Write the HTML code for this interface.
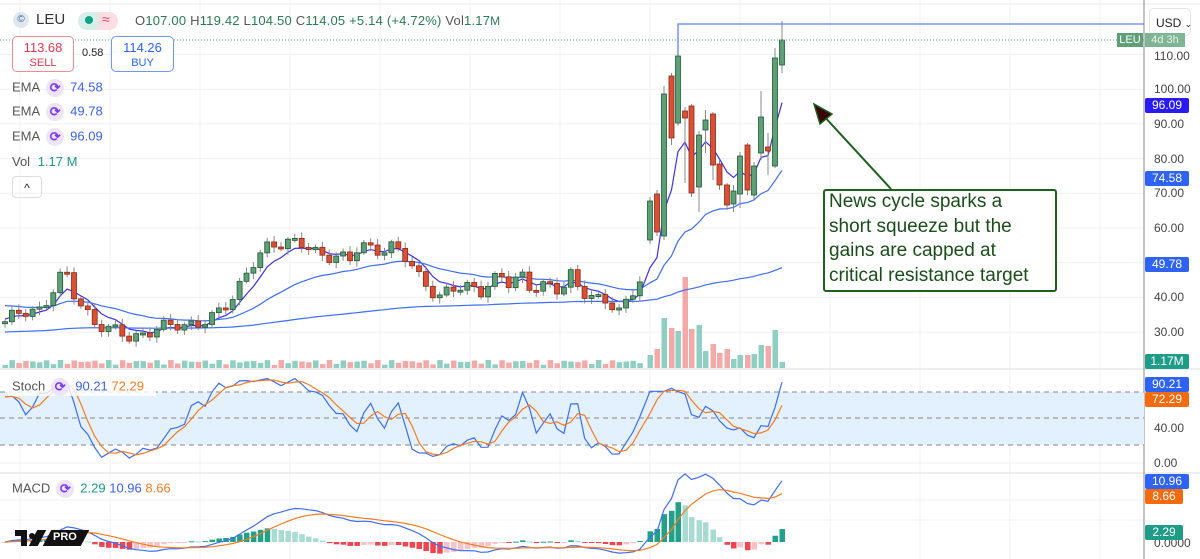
<!DOCTYPE html>
<html><head><meta charset="utf-8"><style>
body{margin:0;width:1200px;height:559px;overflow:hidden;background:#fff;font-family:"Liberation Sans",sans-serif;position:relative}
.t{position:absolute;white-space:nowrap}
.lbl{position:absolute;left:1145px;width:44px;height:15px;color:#fff;font-size:12px;line-height:15px;text-align:center;border-radius:2px}
.ax{position:absolute;left:1154px;font-size:12px;color:#444}
.ic{display:inline-block;width:18px;height:18px;border-radius:50%;background:#ece4fb;color:#7b3bf0;text-align:center;line-height:18px;font-size:13px;font-weight:bold;vertical-align:middle;margin:0 6px}
</style></head><body>
<svg id="s" width="1200" height="559" style="position:absolute;left:0;top:0"></svg>

<div class="t" style="left:13px;top:12px;width:16px;height:16px;border-radius:50%;background:#dfe6ee;color:#3a6a9a;font-size:10px;text-align:center;line-height:16px">©</div>
<div class="t" style="left:36px;top:11px;font-size:15px;color:#333">LEU</div>
<div class="t" style="left:78px;top:12px;width:40px;height:18px;border-radius:9px;background:linear-gradient(90deg,#d7efe9 50%,#fbdde3 50%)"></div>
<div class="t" style="left:85px;top:16px;width:8px;height:8px;border-radius:50%;background:#13a085"></div>
<div class="t" style="left:102px;top:11px;color:#e0426a;font-size:14px">≈</div>
<div class="t" style="left:135px;top:13px;font-size:13px;color:#2a7a55;letter-spacing:0.2px"><span style="color:#555">O</span>107.00 <span style="color:#555">H</span>119.42 <span style="color:#555">L</span>104.50 <span style="color:#555">C</span>114.05 +5.14 (+4.72%) <span style="color:#555">Vol</span>1.17<span style="font-size:12px">M</span></div>

<div class="t" style="left:12px;top:36px;width:60px;height:34px;border:1px solid #f08a96;border-radius:5px;text-align:center;background:#fff">
<div style="color:#e8384f;font-size:13px;margin-top:3px">113.68</div><div style="color:#e8384f;font-size:11px;margin-top:2px">SELL</div></div>
<div class="t" style="left:82px;top:47px;font-size:11px;color:#222">0.58</div>
<div class="t" style="left:111px;top:36px;width:61px;height:34px;border:1px solid #6f98f5;border-radius:5px;text-align:center;background:#fff">
<div style="color:#2962ff;font-size:13px;margin-top:3px">114.26</div><div style="color:#2962ff;font-size:11px;margin-top:2px">BUY</div></div>

<div class="t" style="left:12px;top:79px;font-size:13px;color:#555">EMA<span class="ic">⟳</span><span style="color:#3b62f0">74.58</span></div>
<div class="t" style="left:12px;top:103px;font-size:13px;color:#555">EMA<span class="ic">⟳</span><span style="color:#3b62f0">49.78</span></div>
<div class="t" style="left:12px;top:128px;font-size:13px;color:#555">EMA<span class="ic">⟳</span><span style="color:#3b62f0">96.09</span></div>
<div class="t" style="left:12px;top:154px;font-size:13px;color:#555">Vol <span style="color:#1c9a85;margin-left:4px">1.17 M</span></div>
<div class="t" style="left:12px;top:176px;width:28px;height:20px;border:1px solid #ddd;border-radius:4px;text-align:center;font-size:12px;line-height:22px;color:#222">^</div>

<div class="t" style="left:8px;top:376px;width:148px;height:20px;background:rgba(255,255,255,0.8)"></div>
<div class="t" style="left:12px;top:378px;font-size:13px;color:#555">Stoch<span class="ic">⟳</span><span style="color:#3b62f0">90.21</span> <span style="color:#f57c22">72.29</span></div>
<div class="t" style="left:12px;top:480px;font-size:13px;color:#555">MACD<span class="ic">⟳</span><span style="color:#1c9a85">2.29</span> <span style="color:#3b62f0">10.96</span> <span style="color:#f57c22">8.66</span></div>
<div class="t" style="left:15px;top:530px;width:70px;height:18px">
<div style="position:absolute;left:0;top:0;width:12px;height:6px;background:#111"></div>
<div style="position:absolute;left:6px;top:0;width:6px;height:16px;background:#111"></div>
<div style="position:absolute;left:14px;top:3px;width:6px;height:6px;border-radius:50%;background:#111"></div>
<div style="position:absolute;left:18px;top:0;width:9px;height:16px;background:#111;transform:skewX(-28deg)"></div>
<div style="position:absolute;left:32px;top:0;width:38px;height:16px;background:#111;transform:skewX(-28deg)"></div>
<div style="position:absolute;left:38px;top:1px;color:#fff;font-size:11px;font-weight:bold">PRO</div></div>

<div class="t" style="left:823px;top:189px;width:230px;height:99px;border:2px solid #1f5f1f;border-radius:3px;background:#fff"></div>
<div class="t" style="left:829px;top:190px;font-size:19px;line-height:24.5px;color:#1a4d1a">News cycle sparks a<br>short squeeze but the<br>gains are capped at<br>critical resistance target</div>

<div class="t" style="left:1149px;top:8px;width:42px;height:28px;border:1px solid #e4e4e4;border-radius:5px;font-size:12px;line-height:28px;padding-left:6px;box-sizing:border-box;color:#222">USD <span style="font-size:9px">⌄</span></div>
<div class="t" style="left:1117px;top:33px;width:26px;height:14px;background:#5e9f77;color:#fff;font-size:11px;line-height:14px;text-align:center">LEU</div>
<div class="t" style="left:1145px;top:33px;width:40px;height:14px;background:#7fb594;color:#e9f3ec;font-size:11px;line-height:14px;text-align:center">4d 3h</div>
<div class="ax" style="top:49px">110.00</div>
<div class="ax" style="top:82px">100.00</div>
<div class="ax" style="top:117px">90.00</div>
<div class="ax" style="top:152px">80.00</div>
<div class="ax" style="top:186px">70.00</div>
<div class="ax" style="top:221px">60.00</div>
<div class="ax" style="top:290px">40.00</div>
<div class="ax" style="top:325px">30.00</div>
<div class="lbl" style="top:98px;background:#2a1bf5">96.09</div>
<div class="lbl" style="top:171px;background:#2f63f5">74.58</div>
<div class="lbl" style="top:257px;background:#2f63f5">49.78</div>
<div class="lbl" style="top:354px;background:#1e9c88">1.17M</div>
<div class="lbl" style="top:377px;background:#2f63f5">90.21</div>
<div class="lbl" style="top:392px;background:#f56a0c">72.29</div>
<div class="ax" style="top:421px">40.00</div>
<div class="ax" style="top:456px">0.00</div>
<div class="lbl" style="top:474px;background:#2f63f5">10.96</div>
<div class="lbl" style="top:489px;background:#f56a0c;width:38px">8.66</div>
<div class="ax" style="top:536px">0.0000</div>
<div class="lbl" style="top:525px;background:#1e9c88;width:38px">2.29</div>

<script>
var S=document.getElementById('s'),h='';
function Y(p){return 54.5+(110-p)*3.47}
for(var x=20;x<1144;x+=90)h+='<line x1="'+x+'" y1="0" x2="'+x+'" y2="559" stroke="#f0f0f0"/>';
for(var p=30;p<=110;p+=10)h+='<line x1="0" y1="'+Y(p)+'" x2="1144" y2="'+Y(p)+'" stroke="#f0f0f0"/>';
[428,463,500,520].forEach(function(y){h+='<line x1="0" y1="'+y+'" x2="1144" y2="'+y+'" stroke="#f0f0f0"/>'});
h+='<line x1="0" y1="4" x2="1200" y2="4" stroke="#eee"/>';
h+='<line x1="0" y1="369" x2="1200" y2="369" stroke="#ddd"/><line x1="0" y1="473" x2="1200" y2="473" stroke="#ddd"/>';
h+='<line x1="1144" y1="0" x2="1144" y2="559" stroke="#888"/>';
h+='<rect x="0" y="392" width="1144" height="53" fill="#e3f0fd"/>';
[392,418,445].forEach(function(y){h+='<line x1="0" y1="'+y+'" x2="1144" y2="'+y+'" stroke="#888" stroke-dasharray="5,4"/>'});
var A=[[5,33],[20,35],[40,37],[55,43],[65,47],[75,40],[85,37],[95,33],[110,30],[130,29],[150,30],[165,31],[180,33],[200,32],[215,34],[225,38],[240,44],[255,50],[270,55],[285,57],[300,55],[320,52],[335,53],[350,50],[360,55],[375,54],[390,55],[400,52],[410,50],[420,46],[430,43],[440,40],[450,41],[460,43],[470,44],[480,42],[490,44],[500,45],[510,44],[520,48],[530,43],[540,43],[550,42],[560,42],[570,48],[580,42],[590,40],[600,38],[610,39],[620,37],[630,40],[645,47]];
function interp(x){for(var i=0;i<A.length-1;i++)if(x<=A[i+1][0]){var t=(x-A[i][0])/(A[i+1][0]-A[i][0]);return A[i][1]+t*(A[i+1][1]-A[i][1])}return A[A.length-1][1]}
var C=[],prev=Y(33);
for(var i=0;i<93;i++){var x=5+i*6.9;var c=Y(interp(x)+Math.sin(i*1.7)*1.6+Math.sin(i*0.9)*1.0);
var o=prev;var hi=Math.min(o,c)-2-Math.abs(Math.sin(i*2.3))*4;var lo=Math.max(o,c)+2+Math.abs(Math.cos(i*1.3))*4;C.push({x:x,o:o,c:c,h:hi,l:lo,v:3+Math.abs(Math.sin(i*1.37))*5});prev=c}
var L=[[650,'g',201,240,0,0,13],[657,'r',194,232,0,0,19],[664,'g',94,236,86,240,50],[671.5,'r',76,138,73,145,40],[678,'g',56,123,24,126,37],[685,'r',111,118,107,183,91],[691.5,'r',106,193,104,197,39],[699,'g',135,187,131,212,43],[705.5,'g',120,130,110,153,17],[713,'r',114,165,112,180,24],[719.5,'r',164,185,160,190,15],[727,'r',185,205,183,210,19],[733.5,'g',191,204,185,212,9],[740,'g',156,194,152,208,13],[747.5,'r',145,190,143,195,13],[754,'g',166,195,162,200,14],[761,'g',117,153,91,160,23],[768,'r',147,151,133,175,22],[775,'g',58,166,48,168,38],[782,'g',40,65,21,73,6]];
L.forEach(function(d){var o,c;if(d[1]=='g'){o=d[3];c=d[2]}else{o=d[2];c=d[3]}C.push({x:d[0],o:o,c:c,h:d[4]||d[2]-4,l:d[5]||d[3]+4,v:d[6]})});
C.forEach(function(d,i){var v=d.v;var col=d.c<=d.o?'#8fcfc2':'#f4a9a9';h+='<rect x="'+(d.x-2.5)+'" y="'+(368-v)+'" width="5.5" height="'+v+'" fill="'+col+'"/>'});
function emaA(arr,k,init){var r=[],e=init;arr.forEach(function(v){e=v*k+e*(1-k);r.push(e)});return r}
var cl=C.map(function(d){return d.c});
function line(vals,col,st,w){var s='';vals.forEach(function(v,i){if(i>=st)s+=(s?'L':'M')+C[i].x.toFixed(1)+' '+v.toFixed(1)});h+='<path d="'+s+'" fill="none" stroke="'+col+'" stroke-width="'+(w||1.2)+'"/>'}
line(emaA(cl,2/7,Y(34)),'#3c2ff0',0);
line(emaA(cl,2/27,Y(38)),'#3d6ef5',0);
line(emaA(cl,0.012,Y(30)),'#3d6ef5',0);
C.forEach(function(d){var g=d.c<=d.o;var fill=g?'#5e9f77':'#db5034',st=g?'#1f5b35':'#8a2a18';var t=Math.min(d.o,d.c),b=Math.max(d.o,d.c);if(b-t<2)b=t+2;
h+='<line x1="'+d.x+'" y1="'+d.h+'" x2="'+d.x+'" y2="'+d.l+'" stroke="#888"/>';
h+='<rect x="'+(d.x-2.5)+'" y="'+t+'" width="5" height="'+(b-t)+'" fill="'+fill+'" stroke="'+st+'" stroke-width="0.8"/>'});
h+='<path d="M678 55 L678 24 L1144 24" fill="none" stroke="#5b84f0" stroke-width="1.3"/>';
h+='<line x1="0" y1="40" x2="1144" y2="40" stroke="#5ea882" stroke-dasharray="1,2"/>';
var P=cl.map(function(y){return 110-(y-54.5)/3.47});var Hh=C.map(function(d){return 110-(d.h-54.5)/3.47}),Ll=C.map(function(d){return 110-(d.l-54.5)/3.47});
var K=[];P.forEach(function(c,i){var a=Math.max(0,i-13),mx=-1e9,mn=1e9;for(var j=a;j<=i;j++){mx=Math.max(mx,Hh[j]);mn=Math.min(mn,Ll[j])}K.push(mx>mn?100*(c-mn)/(mx-mn):50)});
function sma(a,n){return a.map(function(v,i){var s=0,c=0;for(var j=Math.max(0,i-n+1);j<=i;j++){s+=a[j];c++}return s/c})}
var K2=sma(K,2),D=sma(K2,3);
line(K2.map(function(v){return 463-v*0.88}),'#3d6ef5',0);line(D.map(function(v){return 463-v*0.88}),'#f57c22',0);
function ema(arr,n){return emaA(arr,2/(n+1),arr[0])}
var e12=ema(P,12),e26=ema(P,26),M=e12.map(function(v,i){return v-e26[i]}),Sg=ema(M,9);
M.forEach(function(v,i){var hv=v-Sg[i];var up=hv>=0;var inc=i>0&&hv>(M[i-1]-Sg[i-1]);var col=up?(inc?'#22a08a':'#a8dcd3'):(inc?'#fbc2c6':'#f0454f');var hh=hv*5.5;
h+='<rect x="'+(C[i].x-2.5)+'" y="'+(hh>0?542-hh:542)+'" width="5.5" height="'+Math.max(1,Math.abs(hh))+'" fill="'+col+'"/>'});
line(M.map(function(v){return 542-v*5.5}),'#3d6ef5',0);line(Sg.map(function(v){return 542-v*5.5}),'#f57c22',0);
h+='<line x1="891" y1="189" x2="822" y2="114" stroke="#1f5f1f" stroke-width="2"/>';
h+='<polygon points="814,104 832,114 820,124" fill="#3a0505" stroke="#1f5f1f" stroke-width="1.5"/>';
S.innerHTML=h;
</script>
</body></html>
